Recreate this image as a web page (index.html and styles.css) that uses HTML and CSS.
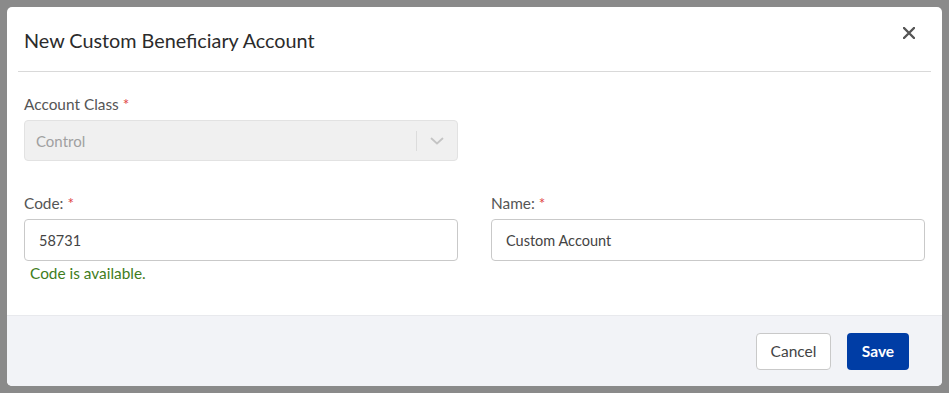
FILE: index.html
```html
<!DOCTYPE html>
<html lang="en">
<head>
  <meta charset="UTF-8" />
  <meta name="viewport" content="width=device-width, initial-scale=1.0"/>
  <title>New Custom Beneficiary Account</title>
  <link rel="stylesheet" href="styles.css">
</head>
<body>

  <div class="modal">
    <div class="modal-header">
      <h2>New Custom Beneficiary Account</h2>
      <button class="close" aria-label="Close">
        <svg width="12" height="12" viewBox="0 0 12 12">
          <path d="M1 1 L11 11 M11 1 L1 11" stroke="#555" stroke-width="2.4" stroke-linecap="round"/>
        </svg>
      </button>
    </div>

    <div class="modal-body">
      <div class="row">
        <div class="form-group">
          <label>Account Class <span class="req">*</span></label>
          <div class="select disabled">
            <span class="value">Control</span>
            <span class="sep"></span>
            <span class="arrow">
              <svg width="14" height="8" viewBox="0 0 14 8">
                <path d="M1.5 1.5 L7 6.5 L12.5 1.5" fill="none" stroke="#c4c4c4" stroke-width="1.8" stroke-linecap="round" stroke-linejoin="round"/>
              </svg>
            </span>
          </div>
        </div>
        <div class="form-group"></div>
      </div>

      <div class="row second">
        <div class="form-group">
          <label for="code">Code: <span class="req">*</span></label>
          <input type="text" id="code" value="58731">
          <div class="hint">Code is available.</div>
        </div>
        <div class="form-group">
          <label for="name">Name: <span class="req">*</span></label>
          <input type="text" id="name" value="Custom Account">
        </div>
      </div>
    </div>

    <div class="modal-footer">
      <button class="btn btn-cancel">Cancel</button>
      <button class="btn btn-save">Save</button>
    </div>
  </div>

</body>
</html>
```

FILE: styles.css
```css
body {
  font-family: 'Lato', 'Open Sans', sans-serif;
  background: #8a8a8a;
  margin: 0;
  padding: 7px;
}

.modal {
  width: 935px;
  height: 379px;
  background: white;
  border-radius: 5px;
  overflow: hidden;
  display: flex;
  flex-direction: column;
}

.modal-header {
  margin: 0 11px;
  height: 64px;
  border-bottom: 1px solid #d9d9d9;
  display: flex;
  align-items: center;
  justify-content: space-between;
  padding: 0 6px;
}

.modal-header h2 {
  margin: 0;
  padding-top: 2px;
  font-size: 19.8px;
  font-weight: 400;
  color: #2b2b2b;
}

.close {
  background: none;
  border: none;
  padding: 0;
  margin-right: 10px;
  margin-top: -12px;
  cursor: pointer;
  display: flex;
}

.modal-body {
  flex: 1;
  padding: 22px 17px 0;
}

.row {
  display: flex;
  gap: 33px;
}

.row.second {
  margin-top: 32px;
}

.form-group {
  flex: 1;
}

.form-group label {
  display: block;
  font-size: 15.4px;
  line-height: 20px;
  color: #555;
  margin-bottom: 6px;
}

.req {
  color: #e04444;
}

.select {
  height: 41px;
  box-sizing: border-box;
  border: 1px solid #e2e2e2;
  border-radius: 4px;
  background: #f0f0f0;
  display: flex;
  align-items: center;
}

.select .value {
  flex: 1;
  padding-left: 11px;
  font-size: 15px;
  color: #a0a0a0;
}

.select .sep {
  width: 1px;
  height: 20px;
  background: #dcdcdc;
}

.select .arrow {
  width: 40px;
  display: flex;
  justify-content: center;
}

.form-group input {
  width: 100%;
  height: 42px;
  box-sizing: border-box;
  padding: 0 14px;
  border: 1px solid #c9c9c9;
  border-radius: 4px;
  font-family: inherit;
  font-size: 14.5px;
  color: #444;
}

.hint {
  margin-top: 3px;
  padding-left: 6px;
  font-size: 15.4px;
  line-height: 18px;
  color: #3f7d1c;
}

.modal-footer {
  height: 71px;
  box-sizing: border-box;
  background: #f2f3f7;
  border-top: 1px solid #e8e9ed;
  display: flex;
  justify-content: flex-end;
  align-items: center;
  gap: 16px;
  padding-right: 33px;
}

.btn {
  height: 37px;
  border-radius: 4px;
  font-family: inherit;
  font-size: 15.5px;
  cursor: pointer;
}

.btn-cancel {
  width: 75px;
  background: white;
  border: 1px solid #c9c9c9;
  color: #444;
}

.btn-save {
  width: 62px;
  background: #003da5;
  border: none;
  color: white;
  font-weight: bold;
}
```
